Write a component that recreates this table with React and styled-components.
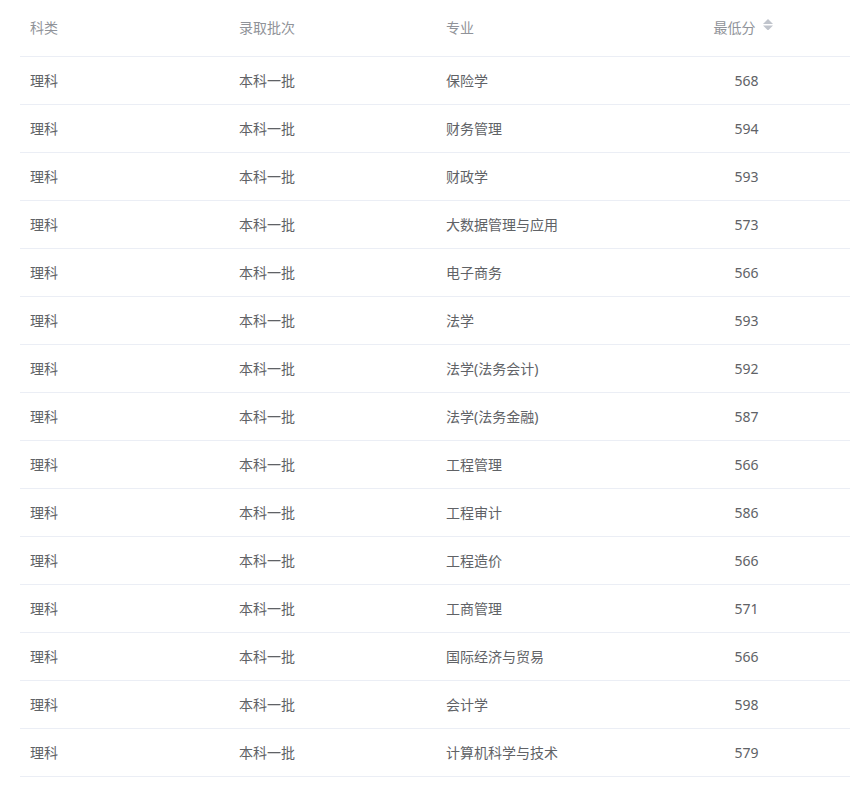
import React from "react";
import styled, { createGlobalStyle } from "styled-components";

const Global = createGlobalStyle`
  html, body { margin: 0; padding: 0; background: #fff; }
  body {
    font-family: "Noto Sans", "Noto Sans CJK SC", sans-serif;
    -webkit-font-smoothing: antialiased;
  }
`;

const Table = styled.div`
  width: 830px;
  margin-left: 20px;
  font-size: 14px;
  line-height: 23px;
`;

const Row = styled.div`
  display: grid;
  grid-template-columns: 209px 207px 207px 1fr;
  border-bottom: 1px solid #ebeef5;
`;

const Cell = styled.div`
  padding: ${(p) => (p.$head ? "16px 10px 17px" : "12px 10px")};
  color: ${(p) => (p.$head ? "#909399" : "#606266")};
  text-align: ${(p) => (p.$center ? "center" : "left")};
  white-space: nowrap;
  display: flex;
  align-items: center;
  justify-content: ${(p) => (p.$center ? "center" : "flex-start")};
`;

const Sort = styled.svg`
  margin: -6px 7px 0 7px;
  flex: none;
`;

const SortIcon = () => (
  <Sort width="10" height="11" viewBox="0 0 10 11">
    <polygon points="0,5 5,0 10,5" fill="#c0c4cc" />
    <polygon points="0,6.5 10,6.5 5,11.5" fill="#c0c4cc" />
  </Sort>
);

const data = [
  ["保险学", 568],
  ["财务管理", 594],
  ["财政学", 593],
  ["大数据管理与应用", 573],
  ["电子商务", 566],
  ["法学", 593],
  ["法学(法务会计)", 592],
  ["法学(法务金融)", 587],
  ["工程管理", 566],
  ["工程审计", 586],
  ["工程造价", 566],
  ["工商管理", 571],
  ["国际经济与贸易", 566],
  ["会计学", 598],
  ["计算机科学与技术", 579],
];

export default function App() {
  return (
    <>
      <Global />
      <Table>
        <Row>
          <Cell $head>科类</Cell>
          <Cell $head>录取批次</Cell>
          <Cell $head>专业</Cell>
          <Cell $head $center>
            最低分
            <SortIcon />
          </Cell>
        </Row>
        {data.map(([major, score]) => (
          <Row key={major}>
            <Cell>理科</Cell>
            <Cell>本科一批</Cell>
            <Cell>{major}</Cell>
            <Cell $center>{score}</Cell>
          </Row>
        ))}
      </Table>
    </>
  );
}
